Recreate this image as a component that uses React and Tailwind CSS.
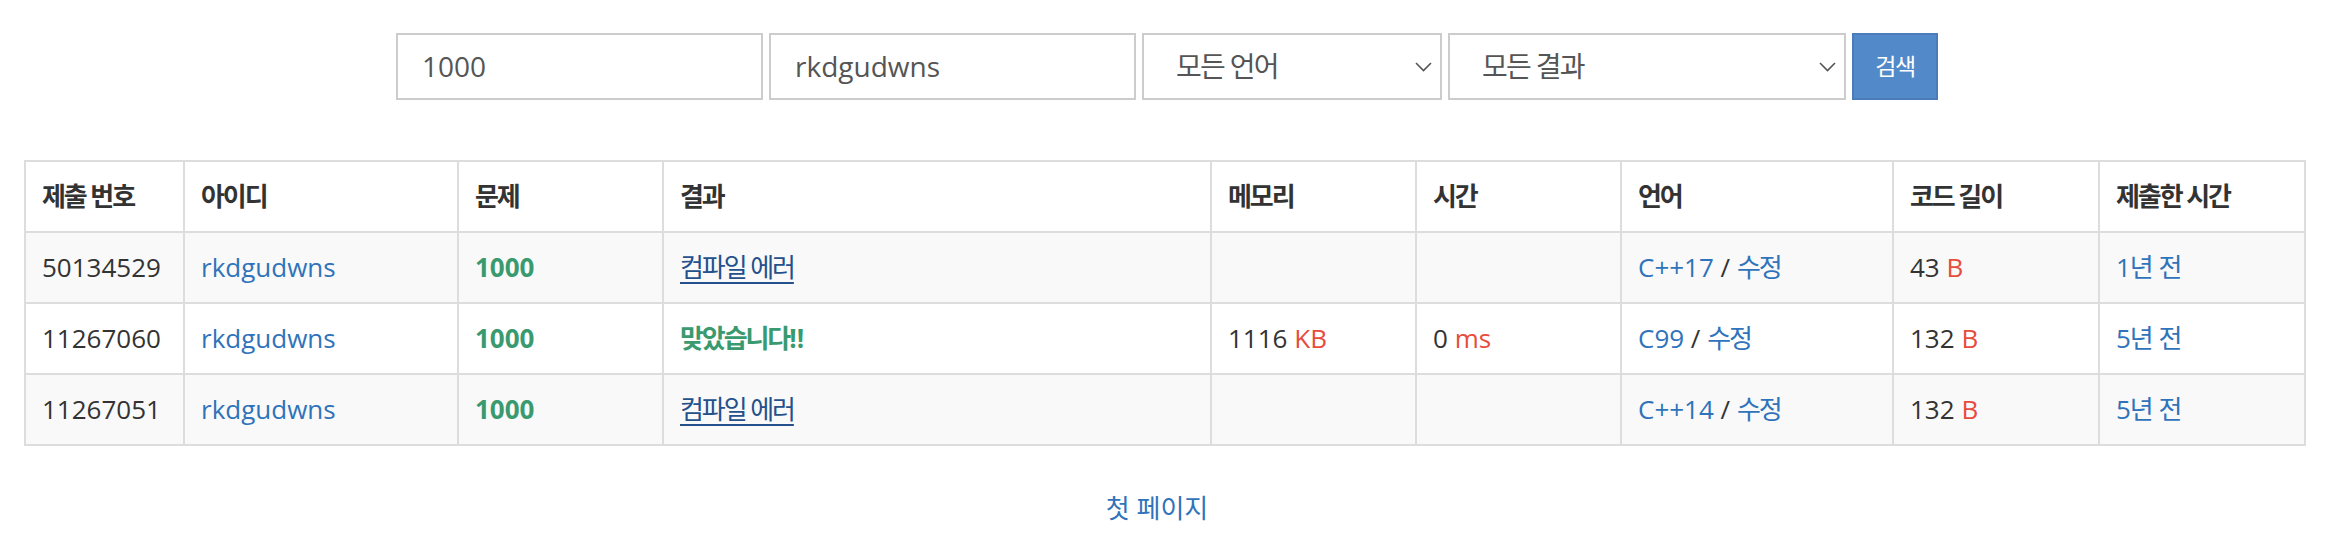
import React from 'react';

const rows = [
    { id: '50134529', user: 'rkdgudwns', problem: '1000', result: 'ce', memory: null, time: null, lang: 'C++17', length: '43', ago: '1년 전' },
    { id: '11267060', user: 'rkdgudwns', problem: '1000', result: 'ac', memory: '1116', time: '0', lang: 'C99', length: '132', ago: '5년 전' },
    { id: '11267051', user: 'rkdgudwns', problem: '1000', result: 'ce', memory: null, time: null, lang: 'C++14', length: '132', ago: '5년 전' },
];

const Chevron = () => (
    <svg width="17" height="10" viewBox="0 0 17 10" fill="none" className="shrink-0">
        <polyline points="1,1 8.5,8.5 16,1" stroke="#555" strokeWidth="1.6" />
    </svg>
);

const SelectBox = ({ label, width }) => (
    <div className={`${width} h-[67px] border-2 border-[#ccc] bg-white flex items-center justify-between pl-[32px] pr-[8px] text-[28px] text-[#555]`}>
        <span className="tracking-[-0.06em]">{label}</span>
        <Chevron />
    </div>
);

const Red = ({ children }) => <span className="text-[#e74c3c]">{children}</span>;

export default function App() {
    return (
        <div className="w-[2328px] h-[540px] bg-white text-[#333] text-[26px] leading-[37px]" style={{ fontFamily: '"Open Sans", "Noto Sans CJK KR", sans-serif' }}>
            {/* search form */}
            <div className="flex justify-center gap-[6px] pt-[33px] pl-[6px]">
                <div className="w-[367px] h-[67px] border-2 border-[#ccc] flex items-center px-[24px] text-[28px] text-[#555]">1000</div>
                <div className="w-[367px] h-[67px] border-2 border-[#ccc] flex items-center px-[24px] text-[28px] text-[#555]">rkdgudwns</div>
                <SelectBox label="모든 언어" width="w-[300px]" />
                <SelectBox label="모든 결과" width="w-[398px]" />
                <button className="w-[86px] h-[67px] bg-[#5289c8] border-2 border-[#4a7cba] text-white text-[23px] flex items-center justify-center">
                    <span className="tracking-[-0.06em]">검색</span>
                </button>
            </div>

            {/* status table */}
            <div className="px-[24px] mt-[60px]">
                <table className="w-full table-fixed border-collapse">
                    <colgroup>
                        <col className="w-[159px]" />
                        <col className="w-[274px]" />
                        <col className="w-[205px]" />
                        <col className="w-[548px]" />
                        <col className="w-[205px]" />
                        <col className="w-[205px]" />
                        <col className="w-[272px]" />
                        <col className="w-[206px]" />
                        <col className="w-[206px]" />
                    </colgroup>
                    <thead>
                        <tr className="text-left">
                            {['제출 번호', '아이디', '문제', '결과', '메모리', '시간', '언어', '코드 길이', '제출한 시간'].map(h => (
                                <th key={h} className="border-2 border-[#ddd] p-[16px] font-bold whitespace-nowrap">
                                    <span className="tracking-[-0.08em]">{h}</span>
                                </th>
                            ))}
                        </tr>
                    </thead>
                    <tbody>
                        {rows.map((r, i) => (
                            <tr key={r.id} className={i % 2 === 0 ? 'bg-[#f9f9f9]' : 'bg-white'}>
                                <td className="border-2 border-[#ddd] p-[16px]">{r.id}</td>
                                <td className="border-2 border-[#ddd] p-[16px] text-[#2f73ba]">{r.user}</td>
                                <td className="border-2 border-[#ddd] p-[16px] font-bold text-[#3a9a6f]">{r.problem}</td>
                                <td className="border-2 border-[#ddd] p-[16px]">
                                    {r.result === 'ac' ? (
                                        <span className="font-bold text-[#3a9a6f]">
                                            <span className="tracking-[-0.08em]">맞았습니다</span>!!
                                        </span>
                                    ) : (
                                        <span className="text-[#24508c] underline decoration-2 underline-offset-[5px] tracking-[-0.08em]">컴파일 에러</span>
                                    )}
                                </td>
                                <td className="border-2 border-[#ddd] p-[16px]">
                                    {r.memory && <>{r.memory} <Red>KB</Red></>}
                                </td>
                                <td className="border-2 border-[#ddd] p-[16px]">
                                    {r.time && <>{r.time} <Red>ms</Red></>}
                                </td>
                                <td className="border-2 border-[#ddd] p-[16px]">
                                    <span className="text-[#2f73ba]">{r.lang}</span> / <span className="text-[#2f73ba] tracking-[-0.08em]">수정</span>
                                </td>
                                <td className="border-2 border-[#ddd] p-[16px]">
                                    {r.length} <Red>B</Red>
                                </td>
                                <td className="border-2 border-[#ddd] p-[16px] text-[#2f73ba]">
                                    <span className="tracking-[-0.04em]">{r.ago}</span>
                                </td>
                            </tr>
                        ))}
                    </tbody>
                </table>
            </div>

            {/* pagination */}
            <div className="flex justify-center mt-[44px] pr-[14px]">
                <a className="text-[#2f73ba] text-[26px]">첫 페이지</a>
            </div>
        </div>
    );
}
